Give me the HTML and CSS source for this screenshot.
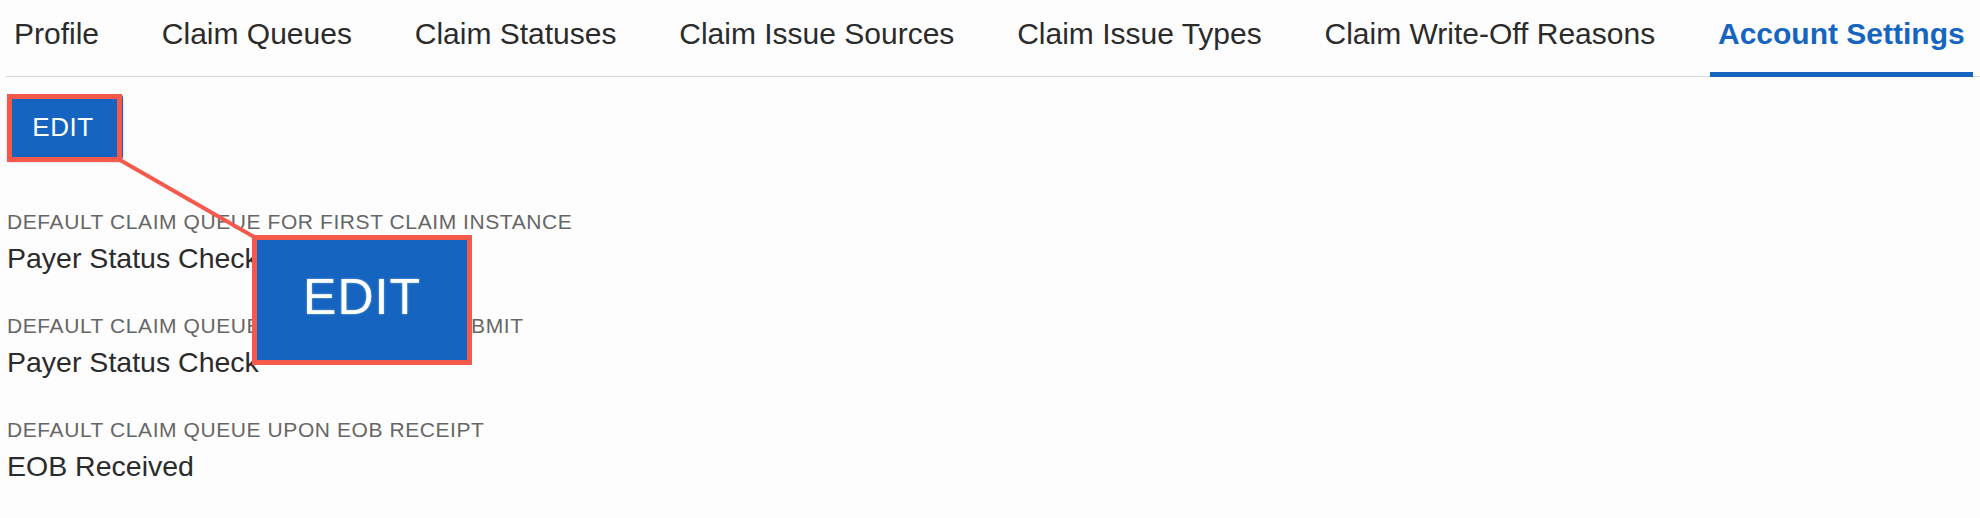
FILE: index.html
```html
<!DOCTYPE html>
<html lang="en">
<head>
<meta charset="utf-8">
<title>Account Settings</title>
<link rel="stylesheet" href="styles.css">
</head>
<body>
<div class="page">
  <nav class="tabs">
    <div class="tab">Profile</div>
    <div class="tab">Claim Queues</div>
    <div class="tab">Claim Statuses</div>
    <div class="tab">Claim Issue Sources</div>
    <div class="tab">Claim Issue Types</div>
    <div class="tab">Claim Write-Off Reasons</div>
    <div class="tab active">Account Settings<span class="indicator"></span></div>
  </nav>

  <div class="content">
    <div class="btn-row">
      <button class="btn">EDIT</button>
      <span class="mark-small"></span>
    </div>

    <div class="field">
      <div class="label">DEFAULT CLAIM QUEUE FOR FIRST CLAIM INSTANCE</div>
      <div class="value">Payer Status Check</div>
    </div>
    <div class="field">
      <div class="label">DEFAULT CLAIM QUEUE UPON CLAIM RESUBMIT</div>
      <div class="value">Payer Status Check</div>
    </div>
    <div class="field">
      <div class="label">DEFAULT CLAIM QUEUE UPON EOB RECEIPT</div>
      <div class="value">EOB Received</div>
    </div>
  </div>

  <svg class="connector" width="1980" height="518" viewBox="0 0 1980 518">
    <line x1="120" y1="160" x2="256" y2="238" stroke="#f4594c" stroke-width="4"/>
  </svg>
  <div class="zoom-box"><span class="zoom-text">EDIT</span></div>
</div>
</body>
</html>
```

FILE: styles.css
```css
html, body {
  margin: 0;
  padding: 0;
  background: #fdfdfd;
}

.page {
  position: relative;
  width: 1980px;
  height: 518px;
  overflow: hidden;
  font-family: "Liberation Sans", Arial, sans-serif;
  color: #2b2b2b;
}

.tabs {
  display: flex;
  gap: 46.8px;
  margin-left: 6px;
  height: 76px;
  border-bottom: 1px solid #d4d8da;
}

.tab {
  position: relative;
  padding: 16px 8px 0;
  font-size: 30px;
  line-height: 36px;
  white-space: nowrap;
  color: #2b2b2b;
}

.tab.active {
  color: #1565c0;
  font-weight: bold;
}

.indicator {
  position: absolute;
  left: 0;
  right: 0;
  bottom: -1px;
  height: 5px;
  background: #1565c0;
}

.content {
  padding-left: 7px;
}

.btn-row {
  position: relative;
  display: flex;
  margin-top: 17px;
  height: 66px;
}

.btn {
  width: 116px;
  height: 66px;
  border: 0;
  border-radius: 4px;
  background: #1565c0;
  color: #ffffff;
  font-family: "Liberation Sans", Arial, sans-serif;
  font-size: 26px;
  letter-spacing: 0.6px;
  box-shadow: 0 3px 2px -2px rgba(0,0,0,0.25), 0 2px 3px rgba(0,0,0,0.18);
  padding: 0 4px 0 0;
}

.mark-small {
  position: absolute;
  left: 0;
  top: 0;
  width: 105px;
  height: 58px;
  border: 5px solid #f4594c;
}

.field {
  margin-top: 50px;
}

.field + .field {
  margin-top: 38px;
}

.label {
  font-size: 21px;
  line-height: 24px;
  letter-spacing: 0.58px;
  color: #666666;
}

.value {
  margin-top: 6px;
  font-size: 28.5px;
  line-height: 36px;
  color: #2b2b2b;
}

.connector {
  position: absolute;
  left: 0;
  top: 0;
  pointer-events: none;
}

.zoom-box {
  position: absolute;
  left: 252px;
  top: 235px;
  width: 210px;
  height: 120px;
  border: 5px solid #f4594c;
  background: #1565c0;
  display: flex;
  align-items: center;
  justify-content: center;
}

.zoom-text {
  font-size: 50px;
  color: #ffffff;
  letter-spacing: 1px;
  margin-top: -6px;
  text-shadow: 0 0 2px rgba(255,255,255,0.6);
}
```
